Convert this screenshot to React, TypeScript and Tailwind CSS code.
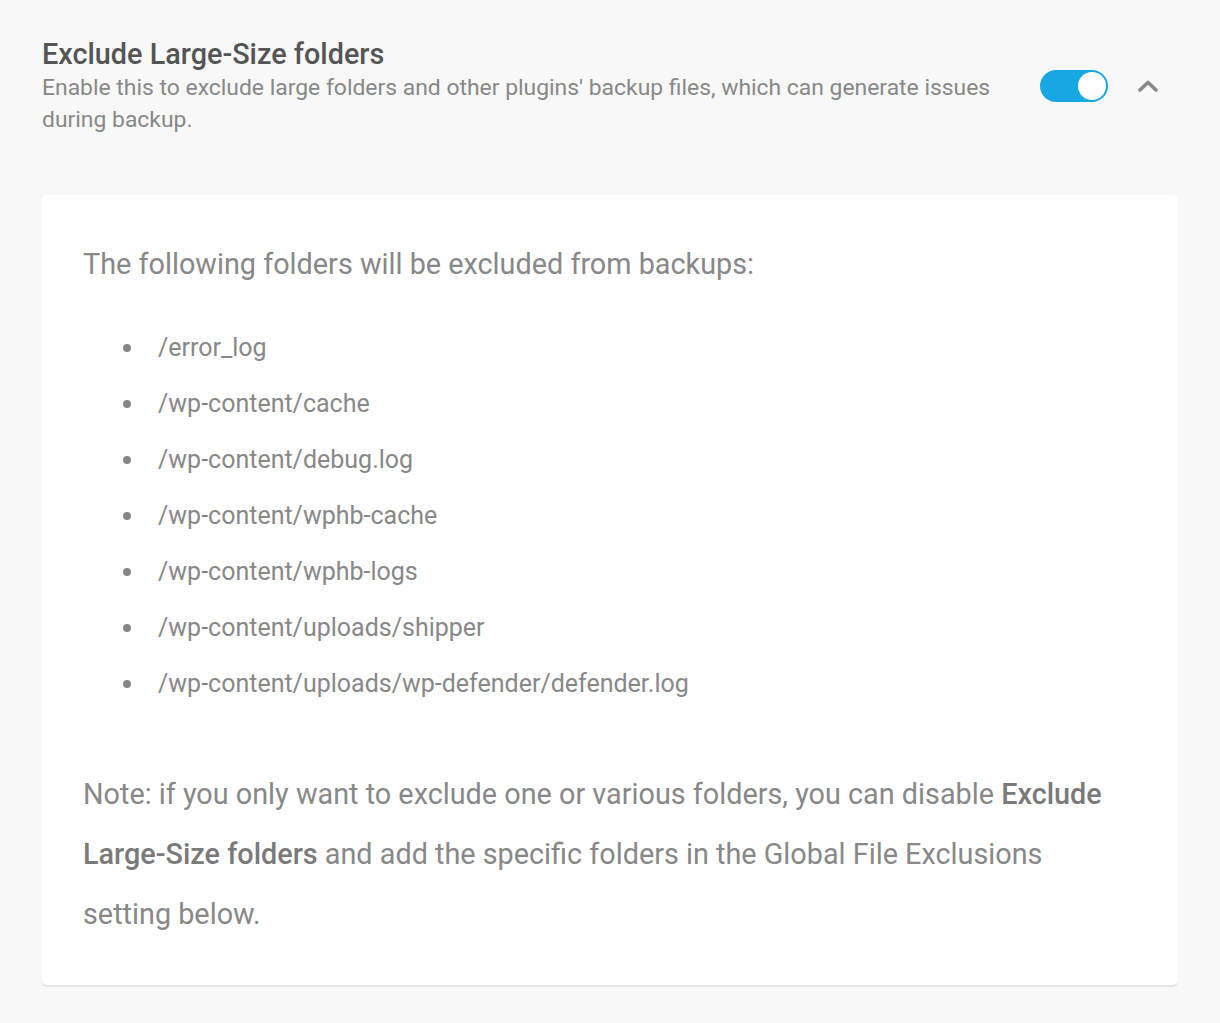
const folders = [
  '/error_log',
  '/wp-content/cache',
  '/wp-content/debug.log',
  '/wp-content/wphb-cache',
  '/wp-content/wphb-logs',
  '/wp-content/uploads/shipper',
  '/wp-content/uploads/wp-defender/defender.log',
];

export default function App() {
  return (
    <div
      className="min-h-[1023px] bg-[#f8f8f8] px-[42px] pt-[36px] text-[#888888]"
      style={{ fontFamily: 'Roboto, "Noto Sans", sans-serif' }}
    >
      {/* Header */}
      <div className="flex items-center">
        <div className="flex-1 mr-[30px]">
          <h2 className="text-[28.8px] leading-[36px] font-medium text-[#555555]">
            Exclude Large-Size folders
          </h2>
          <p className="text-[22.9px] leading-[32px] text-[#888888]">
            Enable this to exclude large folders and other plugins' backup files, which can generate issues during backup.
          </p>
        </div>
        <div className="relative w-[68px] h-[32px] rounded-full bg-[#17a8e3] shrink-0">
          <span className="absolute right-[2px] top-[2px] w-[28px] h-[28px] rounded-full bg-white" />
        </div>
        <button className="ml-[30px] mr-[20px] w-[20px] h-[12px] flex items-center justify-center">
          <svg width="20" height="12" viewBox="0 0 20 12" fill="none">
            <path d="M2 10L10 2.5L18 10" stroke="#888888" strokeWidth="3.6" strokeLinecap="round" strokeLinejoin="round" />
          </svg>
        </button>
      </div>

      {/* Card */}
      <div className="mt-[59px] bg-white rounded-[5px] shadow-[0_2px_0_#e6e6e6] px-[41px] pt-[49px] pb-[41px]">
        <p className="text-[28.8px] leading-[40px]">The following folders will be excluded from backups:</p>
        <ul className="mt-[36px]">
          {folders.map((f) => (
            <li key={f} className="flex items-center text-[25px] leading-[56px]">
              <span className="w-[8px] h-[8px] rounded-full bg-[#888888] ml-[40px] mr-[27px]" />
              {f}
            </li>
          ))}
        </ul>
        <p className="mt-[52px] text-[28.8px] leading-[60px]">
          Note: if you only want to exclude one or various folders, you can disable{' '}
          <strong className="font-medium text-[#7a7a7a]">Exclude Large-Size folders</strong> and add the specific folders in the Global File Exclusions setting below.
        </p>
      </div>
    </div>
  );
}
